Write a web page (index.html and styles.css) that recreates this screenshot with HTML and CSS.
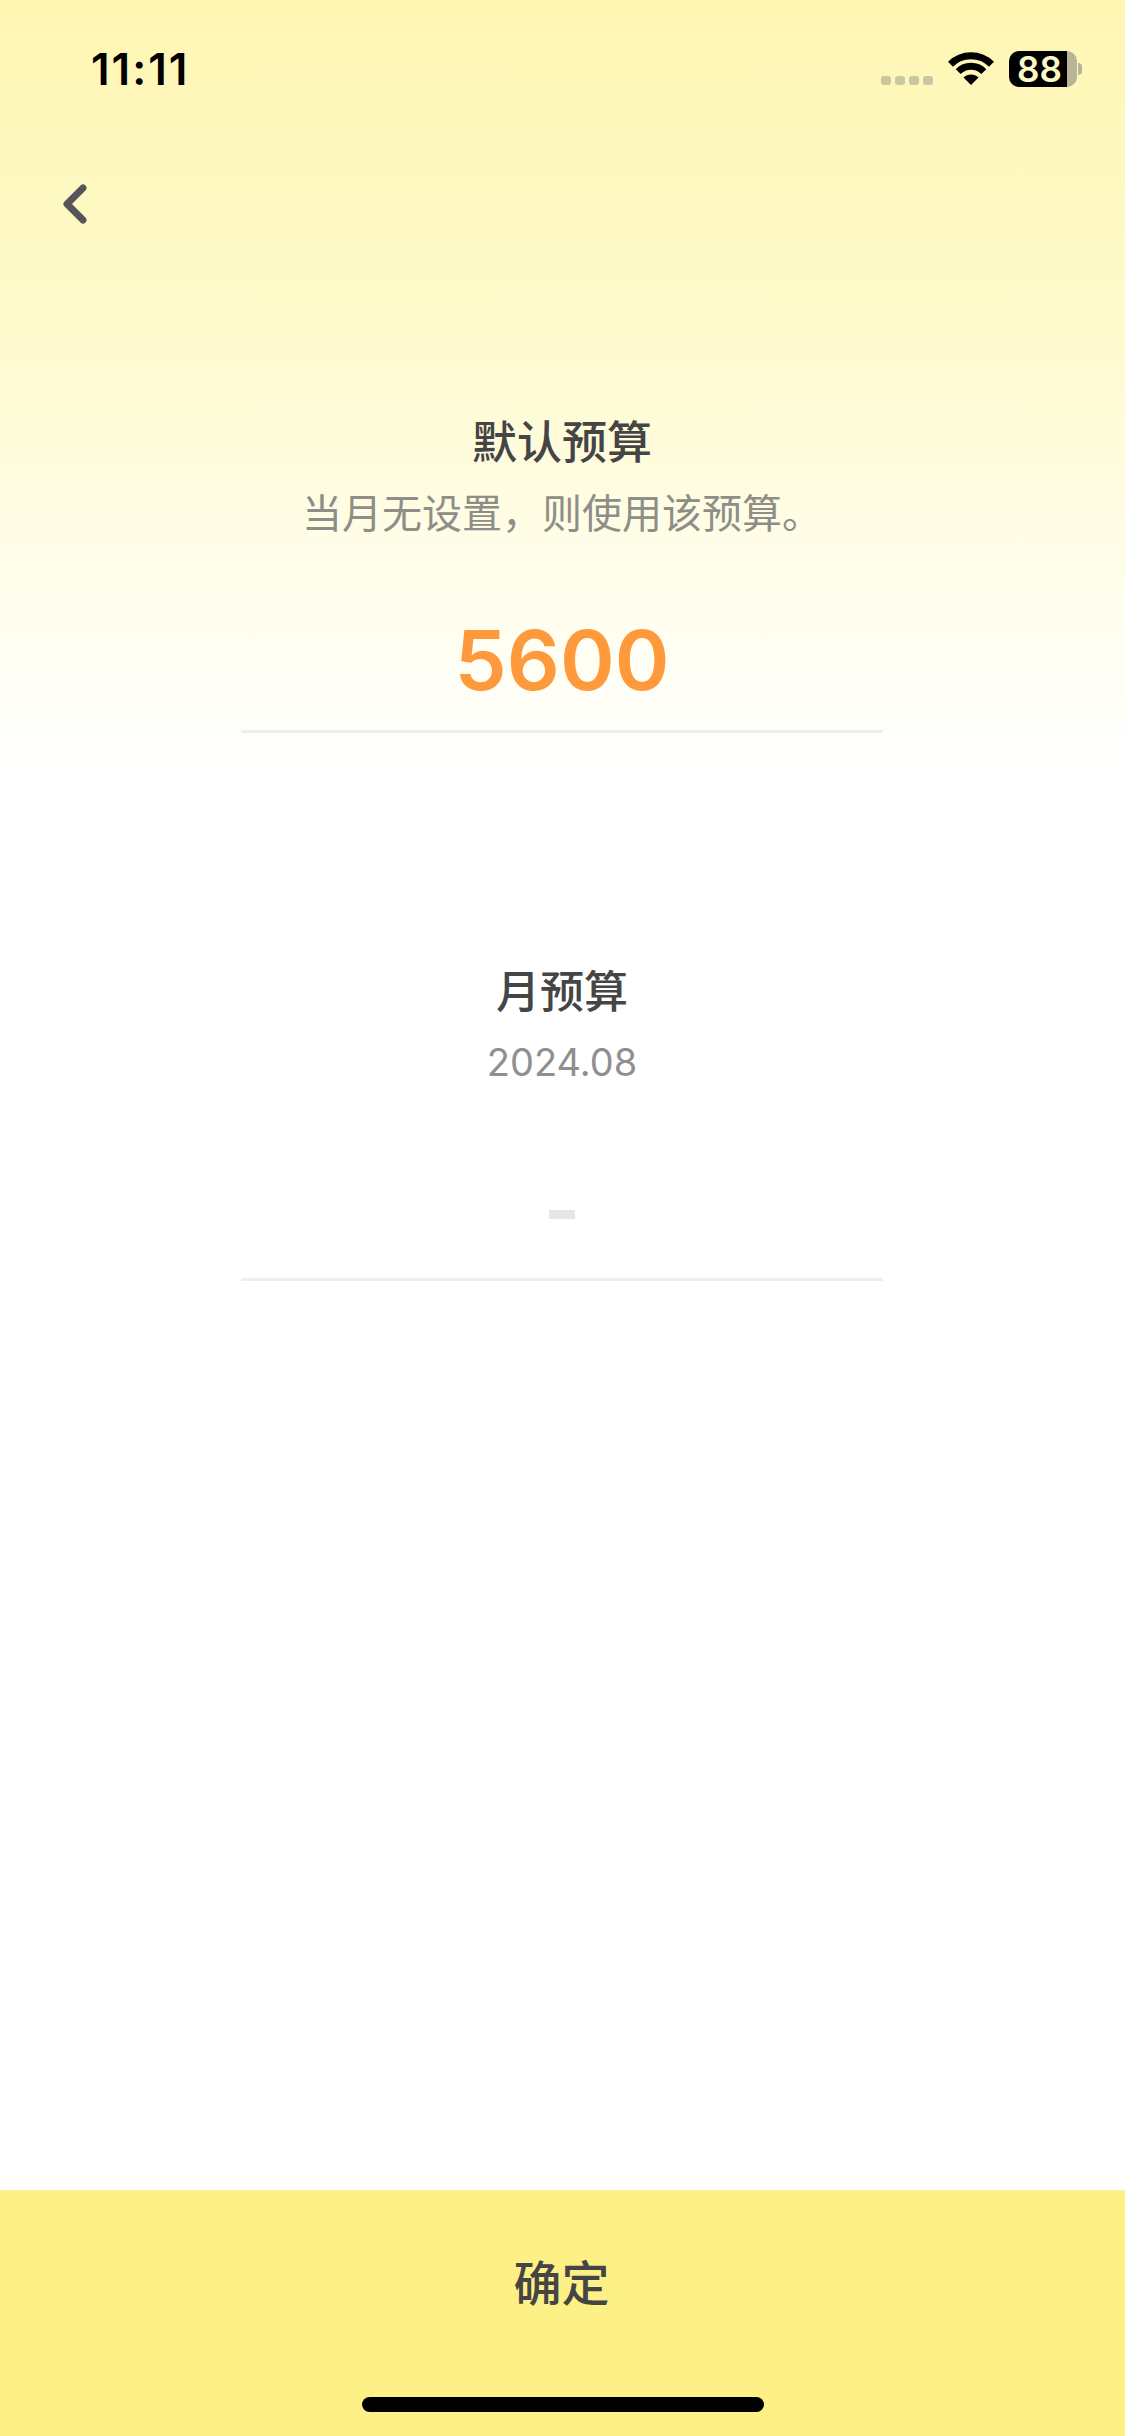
FILE: index.html
```html
<!DOCTYPE html>
<html lang="zh">
  <head>
    <meta charset="utf-8">
    <title>预算设置</title>
    <link rel="stylesheet" href="styles.css">
  </head>

  <body>
    <div class="page">
      <div class="status-bar">
        <div class="time">11:11</div>
        <div class="status-icons">
          <div class="signal"><i></i><i></i><i></i><i></i></div>
          <svg class="wifi" width="46" height="33" viewBox="0 0 46 33">
            <path d="M2.5 12.2A29 29 0 0 1 43.5 12.2" fill="none" stroke="#000" stroke-width="7"/>
            <path d="M10.2 19.6A18 18 0 0 1 35.8 19.6" fill="none" stroke="#000" stroke-width="7"/>
            <path d="M23 33L15.5 25.5A10.6 10.6 0 0 1 30.5 25.5Z" fill="#000"/>
          </svg>
          <div class="battery">88</div>
          <div class="battery-nub"></div>
        </div>
      </div>

      <div class="nav">
        <svg class="back" width="26" height="40" viewBox="0 0 26 40">
          <polyline points="21,4 5,20 21,36" fill="none" stroke="#56565a" stroke-width="7" stroke-linecap="round" stroke-linejoin="round"/>
        </svg>
      </div>

      <div class="content">
        <div class="budget budget-default">
          <h1 class="title">默认预算</h1>
          <p class="sub">当月无设置，则使用该预算。</p>
          <div class="amount">5600</div>
        </div>

        <div class="budget budget-month">
          <h1 class="title title-month">月预算</h1>
          <p class="sub">2024.08</p>
          <div class="amount amount-empty"><span class="empty-dash"></span></div>
        </div>
      </div>

      <div class="footer">
        <div class="confirm">确定</div>
        <div class="home-bar"></div>
      </div>
    </div>
  </body>
</html>
```

FILE: styles.css
```css
* {box-sizing:border-box;}
html, body {margin:0; padding:0;}
body {font-family:"Inter", "Noto Sans CJK SC", sans-serif; color:#454545;}

.page {width:1125px; height:2436px; display:flex; flex-direction:column; background:linear-gradient(180deg, #fef6b2 0, #fefaca 300px, #fffde9 560px, #ffffff 780px);}

.status-bar {height:100px; padding:46px 43px 0 91px; display:flex; justify-content:space-between; align-items:flex-start;}
.time {font-size:44px; font-weight:600; line-height:46px; letter-spacing:2px; color:#000;}
.status-icons {display:flex; align-items:flex-start; margin-top:5px;}
.signal {display:flex; gap:4px; margin-top:25px; margin-right:15px;}
.signal i {display:block; width:10px; height:9px; border-radius:3px; background:#c9c6a2;}
.wifi {margin-top:1px; margin-right:15px;}
.battery {width:68px; height:36px; border-radius:10px; background:linear-gradient(90deg, #000 85%, #b7b498 85%); color:#fdf8c8; font-size:35px; font-weight:600; line-height:36px; padding-left:8px;}
.battery-nub {width:4px; height:12px; margin:12px 0 0 1px; border-radius:0 6px 6px 0; background:#b7b498;}

.nav {height:124px; padding:84px 0 0 62px;}
.back {display:block;}

.content {flex:1; display:flex; flex-direction:column; align-items:center; padding:194px 1px 0 0;}
.budget {width:642px; border-bottom:3px solid #eeeeec; text-align:center;}
.budget-month {margin-top:234px;}
.title {margin:0; font-size:45px; font-weight:500; line-height:50px;}
.title-month {font-size:44px;}
.sub {margin:22px 0 0 0; font-size:40px; font-weight:400; line-height:48px; color:#8e8e88;}
.budget-month .sub {margin-top:21px; font-size:38px; color:#8f8f8f;}
.amount {height:192px; padding-top:77px; font-size:83px; font-weight:600; line-height:90px; color:#ff9a3c;}
.amount-empty {display:flex; justify-content:center; padding-top:124px;}
.empty-dash {display:block; width:26px; height:9px; background:#e6e6e6;}

.footer {height:246px; background:#fcf086; display:flex; flex-direction:column; align-items:center;}
.confirm {margin-top:62px; margin-right:2px; font-size:48px; font-weight:500; line-height:64px;}
.home-bar {width:402px; height:15px; margin-top:81px; border-radius:8px; background:#000;}
```
